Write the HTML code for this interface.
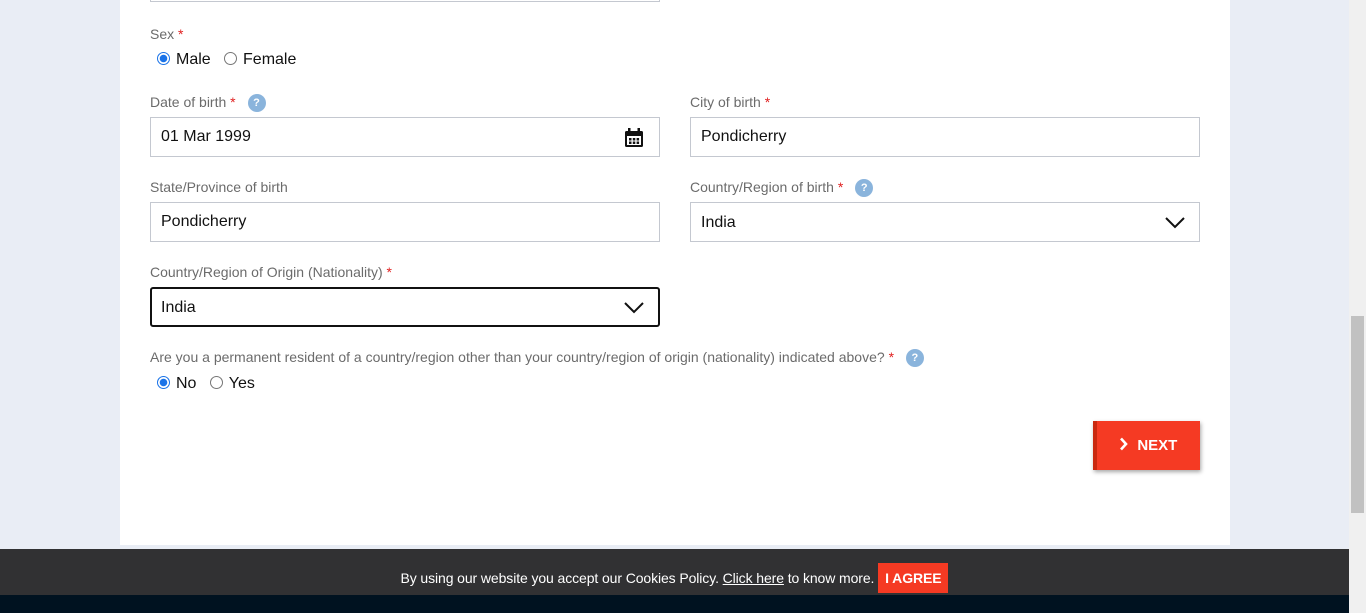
<!DOCTYPE html>
<html><head><style>
body{margin:0;width:1366px;height:613px;overflow:hidden;background:#e9edf5;font-family:"Liberation Sans",Arial,sans-serif;position:relative}
.card{position:absolute;left:120px;top:0;width:1110px;height:545px;background:#fff}
.lbl{position:absolute;font-size:14px;color:#6b6b6b}
.lbl b{color:#e02020;font-weight:normal}
.q{display:inline-block;width:18px;height:18px;border-radius:50%;background:#8ab4dc;color:#fff;font-size:11px;font-weight:bold;text-align:center;line-height:18px;vertical-align:middle;margin-left:8px}
.inp{position:absolute;width:508px;border:1px solid #c4c8d0;font-size:16px;color:#111;line-height:38px;padding-left:10px;box-sizing:border-box;height:40px}
.rad{position:absolute;font-size:16px;color:#111}
.r{display:inline-block;width:13px;height:13px;border:1px solid #777;border-radius:50%;vertical-align:-1px;margin-right:6px;box-sizing:border-box;position:relative}
.r.on{border:1px solid #1a73e8;background:radial-gradient(#1a73e8 3.5px,#fff 4px)}
.chev{position:absolute;right:14px;top:12px}
</style></head><body>
<div class="card">
<div class="inp" style="left:30px;top:-38px;width:510px"></div>
<div class="lbl" style="left:30px;top:26px">Sex <b>*</b></div>
<div class="rad" style="left:37px;top:51px"><span class="r on"></span>Male&nbsp;&nbsp;&nbsp;<span class="r"></span>Female</div>
<div class="lbl" style="left:30px;top:94px">Date of birth <b>*</b> <span class="q">?</span></div>
<div class="inp" style="left:30px;top:117px;width:510px">01 Mar 1999
<svg style="position:absolute;right:15px;top:10px" width="20" height="20" viewBox="0 0 20 20"><rect x="1" y="3" width="18" height="16" rx="1.5" fill="#111"/><rect x="3" y="8" width="14" height="9" fill="#fff"/><rect x="4" y="0" width="2.5" height="5" fill="#111"/><rect x="13.5" y="0" width="2.5" height="5" fill="#111"/><g fill="#111"><rect x="5" y="10" width="2.5" height="2.5"/><rect x="8.8" y="10" width="2.5" height="2.5"/><rect x="12.6" y="10" width="2.5" height="2.5"/><rect x="5" y="13.5" width="2.5" height="2.5"/><rect x="8.8" y="13.5" width="2.5" height="2.5"/><rect x="12.6" y="13.5" width="2.5" height="2.5"/></g></svg></div>
<div class="lbl" style="left:570px;top:94px">City of birth <b>*</b></div>
<div class="inp" style="left:570px;top:117px;width:510px">Pondicherry</div>
<div class="lbl" style="left:30px;top:179px">State/Province of birth</div>
<div class="inp" style="left:30px;top:202px;width:510px">Pondicherry</div>
<div class="lbl" style="left:570px;top:179px">Country/Region of birth <b>*</b> <span class="q">?</span></div>
<div class="inp" style="left:570px;top:202px;width:510px;line-height:40px">India<svg class="chev" width="20" height="14" viewBox="0 0 20 14"><path d="M1 3l9 9 9-9" fill="none" stroke="#111" stroke-width="2"/></svg></div>
<div class="lbl" style="left:30px;top:264px">Country/Region of Origin (Nationality) <b>*</b></div>
<div class="inp" style="left:30px;top:287px;width:510px;border:2px solid #111;border-radius:3px;line-height:38px;padding-left:9px">India<svg class="chev" width="20" height="14" viewBox="0 0 20 14" style="top:11px"><path d="M1 3l9 9 9-9" fill="none" stroke="#111" stroke-width="2"/></svg></div>
<div class="lbl" style="left:30px;top:349px">Are you a permanent resident of a country/region other than your country/region of origin (nationality) indicated above? <b>*</b> <span class="q">?</span></div>
<div class="rad" style="left:37px;top:375px"><span class="r on"></span>No&nbsp;&nbsp;&nbsp;<span class="r"></span>Yes</div>
<div style="position:absolute;left:973px;top:421px;width:107px;height:49px;background:#f53a23;border-left:4px solid #c9280f;box-sizing:border-box;box-shadow:1px 2px 4px rgba(0,0,0,.35);color:#fff;font-weight:bold;font-size:15px;line-height:49px;padding-left:22px"><svg width="10" height="14" viewBox="0 0 10 14" style="vertical-align:-1px"><path d="M2 1.5l5 5.5-5 5.5" fill="none" stroke="#fff" stroke-width="2.6"/></svg>&nbsp; NEXT</div>
</div>
<div style="position:absolute;left:0;top:549px;width:1349px;height:46px;background:#313133"></div>
<div style="position:absolute;left:0;top:563px;width:1349px;text-align:center;color:#fff;font-size:14px;line-height:30px;letter-spacing:-0.1px">By using our website you accept our Cookies Policy. <u>Click here</u> to know more. <span style="display:inline-block;background:#f53a23;padding:0 7px;font-weight:bold">I AGREE</span></div>
<div style="position:absolute;left:0;top:595px;width:1349px;height:18px;background:#001220"></div>
<div style="position:absolute;left:1349px;top:0;width:17px;height:613px;background:#f0f0f0"></div>
<div style="position:absolute;left:1351px;top:316px;width:13px;height:197px;background:#c1c1c1"></div>
</body></html>
